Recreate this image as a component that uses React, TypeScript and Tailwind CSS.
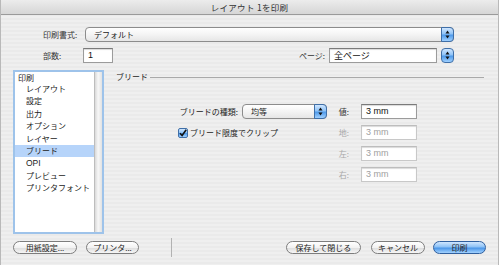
import React from 'react';

const MENU = ['レイアウト', '設定', '出力', 'オプション', 'レイヤー', 'ブリード', 'OPI', 'プレビュー', 'プリンタフォント'];

const Arrows: React.FC = () => (
  <svg width="5" height="9" viewBox="0 0 5 9">
    <path d="M2.5 0.5 L4.5 3.5 L0.5 3.5 Z" fill="#111" />
    <path d="M2.5 8.5 L4.5 5.5 L0.5 5.5 Z" fill="#111" />
  </svg>
);

const BlueCap: React.FC<{ className?: string }> = ({ className = '' }) => (
  <div
    className={`flex items-center justify-center border border-[#3f6fa8] bg-[linear-gradient(180deg,#cfe6ff_0%,#8fc3f7_45%,#4f9aea_55%,#9fd0ff_100%)] ${className}`}
  >
    <Arrows />
  </div>
);

const Popup: React.FC<{ text: string; className?: string }> = ({ text, className = '' }) => (
  <div
    className={`flex h-[15px] items-stretch rounded-[4px] border border-[#8c8c8c] bg-[linear-gradient(180deg,#ffffff_0%,#f4f4f4_50%,#e6e6e6_100%)] ${className}`}
  >
    <div className="flex-1 pl-[8px] leading-[13px]">{text}</div>
    <BlueCap className="w-[13px] -my-px -mr-px rounded-r-[4px]" />
  </div>
);

const Field: React.FC<{ value?: string; disabled?: boolean; className?: string }> = ({ value = '', disabled, className = '' }) => (
  <div
    className={`h-[15px] border border-[#9b9b9b] border-t-[#7a7a7a] bg-white pl-[4px] font-['Liberation_Sans',sans-serif] text-[9px] leading-[13px] shadow-[inset_0_1px_1px_rgba(0,0,0,0.15)] ${
      disabled ? 'border-[#c8c8c8] border-t-[#bdbdbd] text-[#a0a0a0]' : 'text-[#111]'
    } ${className}`}
  >
    {value}
  </div>
);

const Button: React.FC<{ label: string; className?: string }> = ({ label, className = '' }) => (
  <div
    className={`flex h-[13px] items-center justify-center rounded-full border border-[#7d7d7d] bg-[linear-gradient(180deg,#ffffff_0%,#f2f2f2_50%,#dedede_55%,#f6f6f6_100%)] text-[8px] ${className}`}
  >
    {label}
  </div>
);

const App: React.FC = () => {
  return (
    <div className="flex h-[265px] w-[499px] flex-col overflow-hidden border-x border-[#b9b9b9] bg-[repeating-linear-gradient(180deg,#efefef_0px,#efefef_2px,#eaeaea_2px,#eaeaea_4px)] font-['Noto_Sans_CJK_JP',sans-serif] text-[8px] text-[#222]">
      {/* Title bar */}
      <div className="flex h-[15px] shrink-0 items-center justify-center border-b border-[#9a9a9a] bg-[linear-gradient(180deg,#ececec_0%,#d6d6d6_100%)] text-[8.5px] tracking-[0.3px] text-[#333]">
        レイアウト 1を印刷
      </div>

      {/* Print style */}
      <div className="mt-[12px] flex h-[15px] items-center">
        <div className="w-[84px] pl-[42px] text-[#333]">印刷書式:</div>
        <Popup text="デフォルト" className="w-[369px]" />
      </div>

      {/* Copies / pages */}
      <div className="mt-[6px] flex h-[15px] items-center">
        <div className="w-[82px] pl-[42px] text-[#333]">部数:</div>
        <Field value="1" className="w-[30px]" />
        <div className="w-[216px] pr-[4px] text-right text-[#333]">ページ:</div>
        <Field value="全ページ" className="w-[108px] font-['Noto_Sans_CJK_JP',sans-serif] text-[8px]" />
        <BlueCap className="ml-[4px] h-[15px] w-[13px] rounded-[4px]" />
      </div>

      {/* Main area */}
      <div className="mt-[7px] flex">
        {/* Category list */}
        <div className="ml-[12px] flex h-[164px] w-[91px] border-2 border-[#9ec3ea]">
          <div className="w-[79px] overflow-hidden bg-white">
            <div className="h-[11px] pl-[3px] leading-[11px] text-[#222]">印刷</div>
            {MENU.map((item) => (
              <div
                key={item}
                className={`h-[12.4px] pl-[11px] leading-[12.4px] ${item === 'ブリード' ? 'bg-[#b6d4fa]' : ''} ${
                  item === 'OPI' ? "font-['Liberation_Sans',sans-serif] text-[8.5px]" : ''
                }`}
              >
                {item}
              </div>
            ))}
          </div>
          <div className="w-[8px] border-l border-[#bdbdbd] bg-[linear-gradient(90deg,#d9d9d9_0%,#f7f7f7_45%,#e2e2e2_100%)]" />
        </div>

        {/* Bleed panel */}
        <div className="ml-[12px] flex flex-1 flex-col pr-[14px]">
          <div className="mt-[2px] flex h-[10px] items-center">
            <span className="text-[#222]">ブリード</span>
            <div className="ml-[2px] h-px flex-1 bg-[#a9a9a9]" />
          </div>

          <div className="mt-[22px] flex flex-col gap-[6px]">
            <div className="flex h-[15px] items-center">
              <div className="w-[126px] pr-[4px] text-right">ブリードの種類:</div>
              <Popup text="均等" className="w-[85px]" />
              <div className="w-[34px] pr-[12px] text-right text-[#333]">値:</div>
              <Field value="3 mm" className="w-[56px]" />
            </div>

            <div className="flex h-[15px] items-center">
              <div className="flex w-[211px] items-center pl-[62px]">
                <div className="flex h-[10px] w-[10px] items-center justify-center rounded-[2px] border border-[#3f6fa8] bg-[linear-gradient(180deg,#cfe6ff_0%,#8fc3f7_45%,#4f9aea_55%,#9fd0ff_100%)]">
                  <svg width="8" height="8" viewBox="0 0 8 8">
                    <path d="M1 4.2 L3.1 6.5 L7.2 0.8" fill="none" stroke="#111" strokeWidth="1.6" />
                  </svg>
                </div>
                <span className="ml-[2px]">ブリード限度でクリップ</span>
              </div>
              <div className="w-[34px] pr-[12px] text-right text-[#a8a8a8]">地:</div>
              <Field value="3 mm" disabled className="w-[56px]" />
            </div>

            <div className="flex h-[15px] items-center">
              <div className="w-[211px]" />
              <div className="w-[34px] pr-[12px] text-right text-[#a8a8a8]">左:</div>
              <Field value="3 mm" disabled className="w-[56px]" />
            </div>

            <div className="flex h-[15px] items-center">
              <div className="w-[211px]" />
              <div className="w-[34px] pr-[12px] text-right text-[#a8a8a8]">右:</div>
              <Field value="3 mm" disabled className="w-[56px]" />
            </div>
          </div>
        </div>
      </div>

      {/* Bottom buttons */}
      <div className="mt-[4px] flex h-[19px] items-center">
        <Button label="用紙設定..." className="ml-[12px] w-[64px]" />
        <Button label="プリンタ..." className="ml-[9px] w-[53px]" />
        <div className="ml-[32px] h-[19px] w-px bg-[#b2b2b2]" />
        <div className="flex-1" />
        <Button label="保存して閉じる" className="w-[75px]" />
        <Button label="キャンセル" className="ml-[10px] w-[54px]" />
        <div className="ml-[8px] mr-[12px] flex h-[13px] w-[53px] items-center justify-center rounded-full border border-[#2f5f9e] bg-[linear-gradient(180deg,#cfe6ff_0%,#8cc1f6_45%,#4b96e8_55%,#a2d2ff_100%)] text-[8px]">
          印刷
        </div>
      </div>
    </div>
  );
};

export default App;
